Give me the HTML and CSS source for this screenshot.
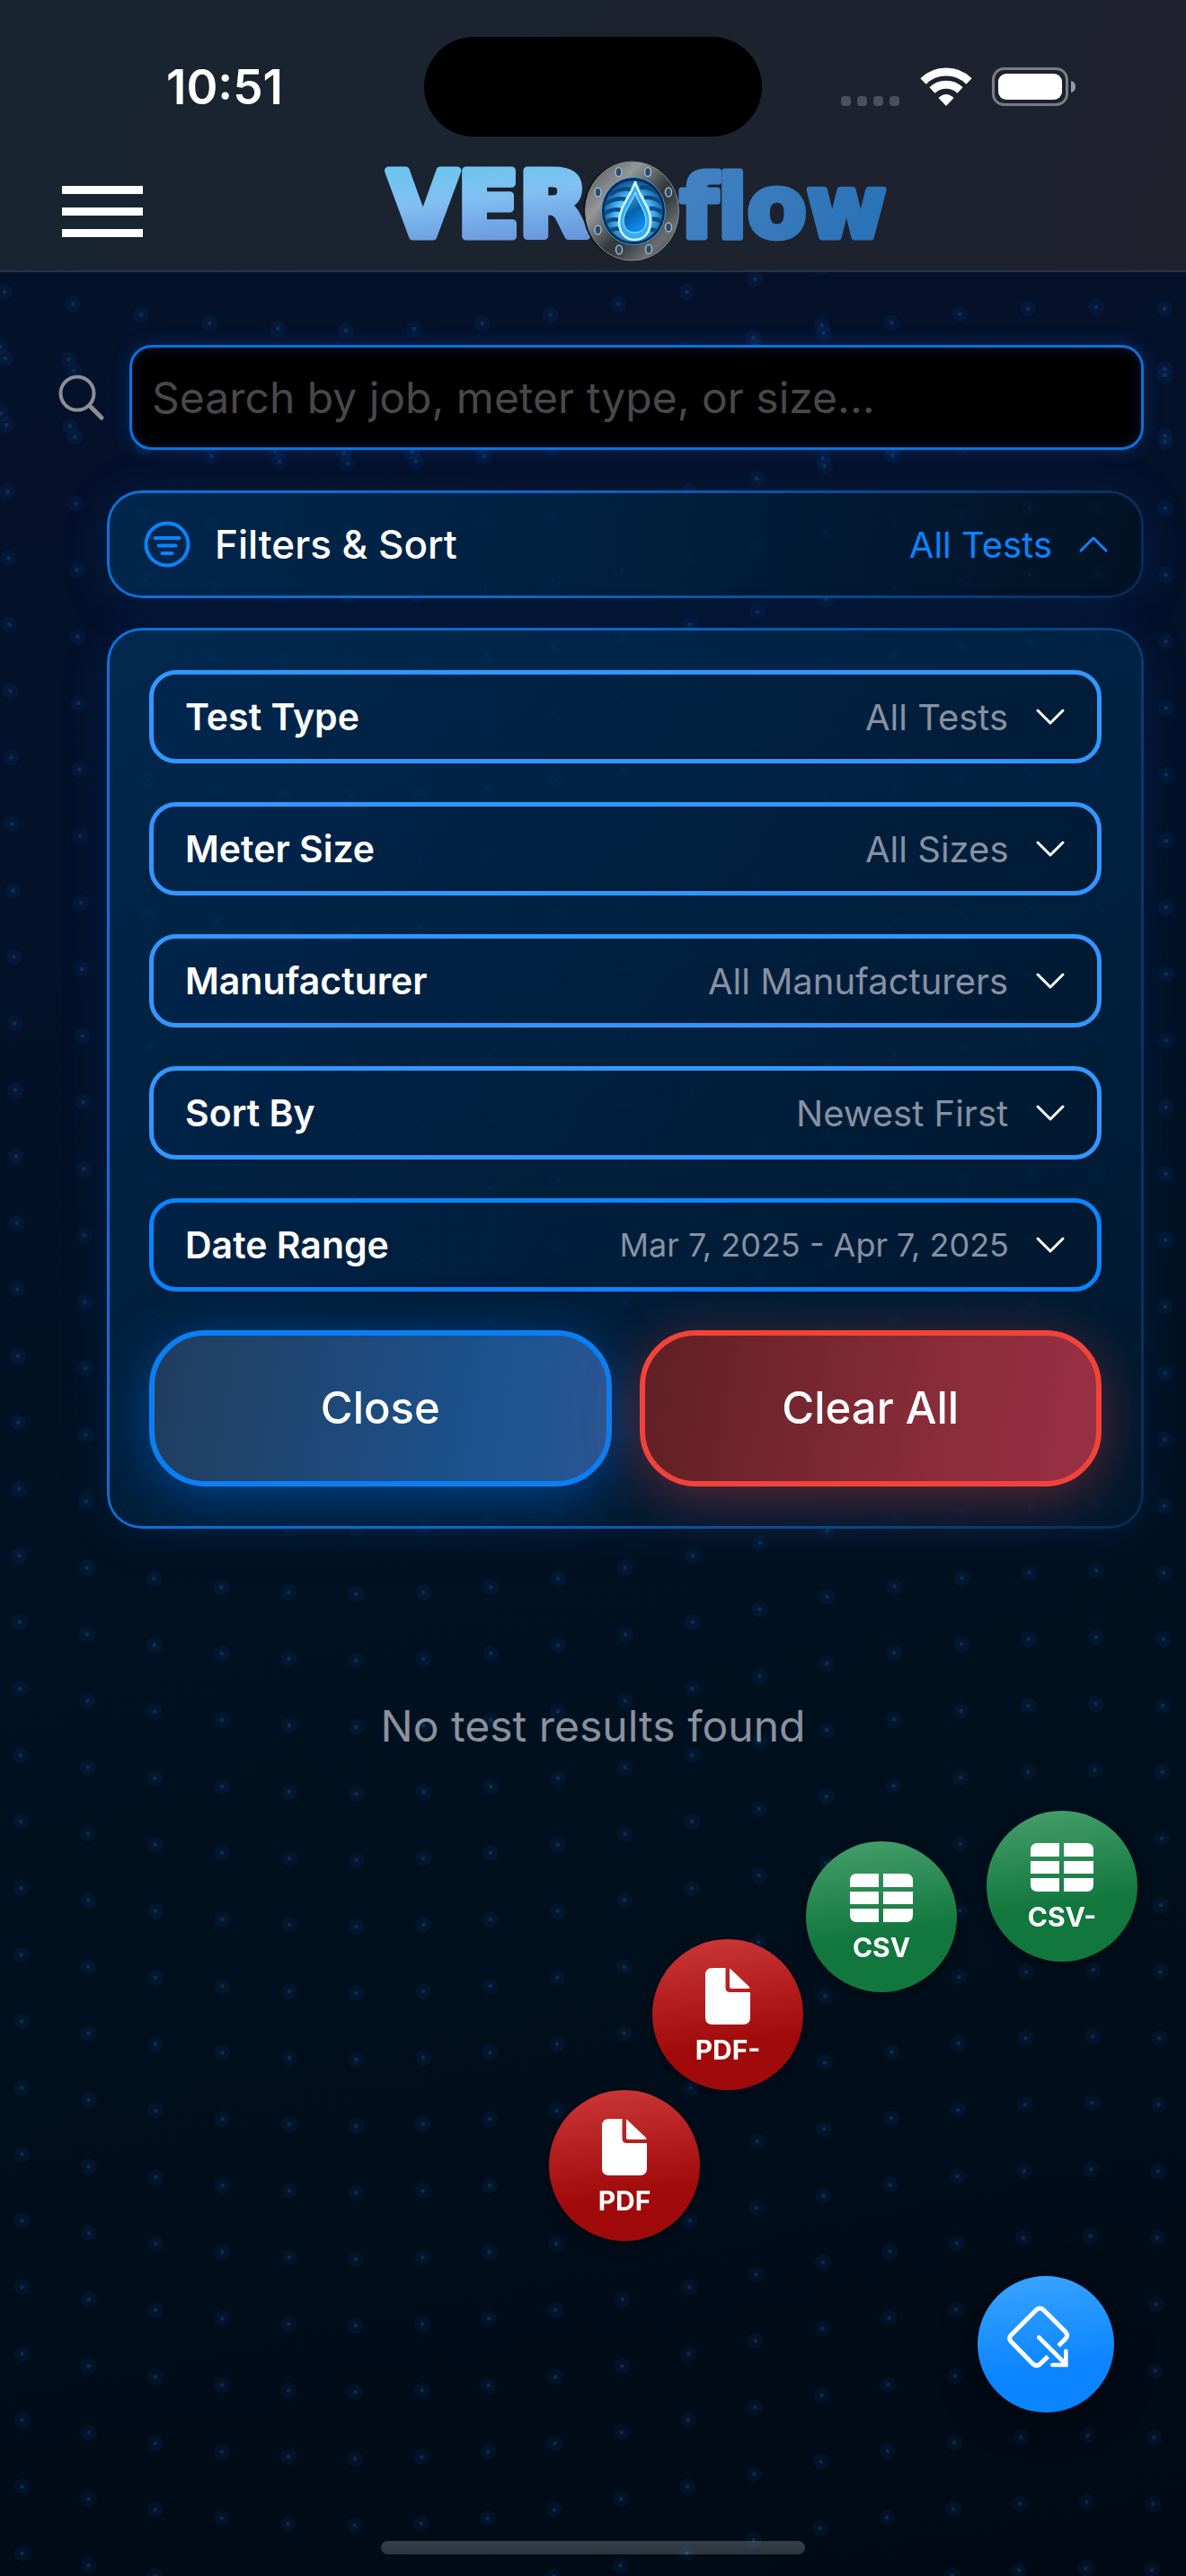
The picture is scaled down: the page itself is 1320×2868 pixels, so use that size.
FILE: index.html
```html
<!DOCTYPE html>
<html lang="en">
<head>
<meta charset="utf-8">
<meta name="viewport" content="width=device-width, initial-scale=1">
<title>VEROflow – Test Results</title>
<link rel="stylesheet" href="styles.css">
</head>
<body>
<svg class="dots" id="dots" aria-hidden="true"></svg>

<header class="header">
  <div class="status">
    <time class="clock">10:51</time>
    <span class="island"></span>
    <span class="status-icons">
      <svg width="66" height="44" viewBox="0 0 66 44" aria-hidden="true"><g fill="#4b515c"><rect x="0" y="32" width="11" height="11" rx="4"/><rect x="18" y="32" width="11" height="11" rx="4"/><rect x="36" y="32" width="11" height="11" rx="4"/><rect x="54" y="32" width="11" height="11" rx="4"/></g></svg>
      <svg width="58" height="44" viewBox="0 0 58 44" aria-hidden="true"><g fill="none" stroke="#fff" stroke-width="9"><path d="M3.500 15.500A36.500 36.500 0 0 1 54.500 15.500"/><path d="M13.500 25.500A22.500 22.500 0 0 1 44.500 25.500"/></g><path d="M20.500 34Q29 26 37.500 34L30 42Q29 43 28 42Z" fill="#fff"/></svg>
      <svg width="94" height="44" viewBox="0 0 94 44" aria-hidden="true"><rect x="1.500" y="1.500" width="82" height="40" rx="12" fill="none" stroke="#787d86" stroke-width="3"/><rect x="7" y="7" width="71" height="29" rx="9" fill="#fff"/><path d="M88 15Q93 16 93 21.500T88 28Z" fill="#9599a0"/></svg>
    </span>
  </div>
  <div class="bar">
    <button class="menu" type="button" aria-label="Menu"><span></span><span></span><span></span></button>
    <svg class="logo" width="568" height="116" viewBox="426 178 568 116" role="img" aria-label="VEROflow">
      <defs>
        <linearGradient id="ver" x1="0" y1="0" x2="0.2" y2="1"><stop offset=".2" stop-color="#6cc6ee"/><stop offset=".5" stop-color="#82bff3"/><stop offset="1" stop-color="#6592da"/></linearGradient>
        <linearGradient id="flo" x1="0" y1="0" x2="1" y2="0.3"><stop offset="0" stop-color="#4683c4"/><stop offset="1" stop-color="#2a73b6"/></linearGradient>
        <linearGradient id="metal" x1="0" y1="0" x2="1" y2="1"><stop offset="0" stop-color="#4a4f53"/><stop offset=".3" stop-color="#94979a"/><stop offset=".55" stop-color="#33393c"/><stop offset=".62" stop-color="#33393c"/><stop offset=".8" stop-color="#6b6f72"/><stop offset="1" stop-color="#3d4143"/></linearGradient>
        <radialGradient id="core" cx=".5" cy=".55" r=".55"><stop offset="0" stop-color="#d8f6ff"/><stop offset=".55" stop-color="#46b9fb"/><stop offset="1" stop-color="#0a4584"/></radialGradient>
        <linearGradient id="drop" x1="0" y1="0" x2="0.4" y2="1"><stop offset="0" stop-color="#45b4f8"/><stop offset=".55" stop-color="#0562ac"/><stop offset="1" stop-color="#0a8df0"/></linearGradient>
        <clipPath id="lens"><ellipse cx="705" cy="236" rx="32" ry="34"/></clipPath>
      </defs>
      <text class="logo-ver" x="432" y="264" fill="url(#ver)" stroke="url(#ver)">VER</text>
      <text class="logo-flow" x="757" y="265" fill="url(#flo)" stroke="url(#flo)">flow</text>
      <ellipse cx="701" cy="236" rx="52" ry="55" fill="#111416"/>
      <ellipse cx="703.500" cy="236" rx="52" ry="55" fill="url(#metal)" stroke="#888c8e"/>
      <g fill="#1f4d78" stroke="#aeb3b6" stroke-width="1.500">
        <ellipse cx="688.500" cy="192.500" rx="3.500" ry="5"/><ellipse cx="721" cy="192.500" rx="3.500" ry="5"/>
        <ellipse cx="665.500" cy="215" rx="3.500" ry="5"/><ellipse cx="744" cy="215" rx="3.500" ry="5"/>
        <ellipse cx="665.500" cy="257" rx="3.500" ry="5"/><ellipse cx="744" cy="254" rx="3.500" ry="5"/>
        <ellipse cx="689" cy="279" rx="3.500" ry="5"/><ellipse cx="722" cy="278.500" rx="3.500" ry="5"/>
      </g>
      <ellipse cx="705" cy="236" rx="34" ry="36" fill="url(#core)" stroke="#06264c" stroke-width="3"/>
      <ellipse cx="705" cy="236" rx="35.500" ry="37.500" fill="none" stroke="#3ba2e8" stroke-width="1"/>
      <g clip-path="url(#lens)" fill="none" stroke="#0b4b82" stroke-width="4.500">
        <path d="M678 218Q692 209 702 212M672 229Q685 220 697 223M671 240Q682 232 691 235M671 251Q680 243 688 246M674 262Q682 254 690 256"/>
        <path d="M712 210Q722 208 732 216M717 221Q727 219 738 228M723 233Q731 232 740 240M726 245Q733 244 740 251M724 257Q730 256 737 261"/>
      </g>
      <path d="M707 203C710 218 724 231 724 247C724 261 716 268 706 268C696 268 689 260 689 248C689 231 703 218 707 203Z" fill="#35aef5" stroke="#d5f5ff" stroke-width="2.500"/>
      <path d="M707 215C709 226 719 236 719 247C719 256 713 260 706 260C699 260 694 255 694 247C694 236 704 226 707 215Z" fill="url(#drop)" stroke="#bdeaff" stroke-width="1"/>
    </svg>
  </div>
</header>

<main>
  <div class="content">
    <div class="search">
      <svg width="52" height="52" viewBox="0 0 52 52" aria-hidden="true"><g fill="none" stroke="#8e8e93" stroke-width="4" stroke-linecap="round"><circle cx="21" cy="21" r="18.500"/><path d="M35 35L48 48" stroke-width="5"/></g></svg>
      <input type="text" aria-label="Search tests" placeholder="Search by job, meter type, or size...">
    </div>

    <button class="glass summary" type="button" aria-expanded="true">
      <svg width="52" height="52" viewBox="0 0 52 52" aria-hidden="true"><g fill="none" stroke="#0a84ff" stroke-width="4" stroke-linecap="round"><circle cx="26" cy="26" r="23.500"/><path d="M12.500 19H39.500M16.500 27.500H35.500M20.500 36H31.500"/></g></svg>
      <span class="summary-title">Filters &amp; Sort</span>
      <span class="value summary-value">All Tests</span>
      <svg width="34" height="20" viewBox="0 0 34 20" aria-hidden="true"><path d="M3 17L17 3L31 17" fill="none" stroke="#0a84ff" stroke-width="3" stroke-linecap="round" stroke-linejoin="round"/></svg>
    </button>

    <section class="glass panel" aria-label="Filters">
      <label class="row"><span>Test Type</span>
        <select class="value"><option>All Tests</option></select>
        <svg width="34" height="20" viewBox="0 0 34 20" aria-hidden="true"><path class="chev" d="M3 3L17 17L31 3"/></svg></label>
      <label class="row"><span>Meter Size</span>
        <select class="value"><option>All Sizes</option></select>
        <svg width="34" height="20" viewBox="0 0 34 20" aria-hidden="true"><path class="chev" d="M3 3L17 17L31 3"/></svg></label>
      <label class="row"><span>Manufacturer</span>
        <select class="value"><option>All Manufacturers</option></select>
        <svg width="34" height="20" viewBox="0 0 34 20" aria-hidden="true"><path class="chev" d="M3 3L17 17L31 3"/></svg></label>
      <label class="row"><span>Sort By</span>
        <select class="value"><option>Newest First</option></select>
        <svg width="34" height="20" viewBox="0 0 34 20" aria-hidden="true"><path class="chev" d="M3 3L17 17L31 3"/></svg></label>
      <button class="row row-date" type="button"><span>Date Range</span>
        <span class="value value-small">Mar 7, 2025 - Apr 7, 2025</span>
        <svg width="34" height="20" viewBox="0 0 34 20" aria-hidden="true"><path class="chev" d="M3 3L17 17L31 3"/></svg></button>
      <div class="actions">
        <button class="action close" type="button">Close</button>
        <button class="action clear" type="button">Clear All</button>
      </div>
    </section>
  </div>

  <p class="empty">No test results found</p>
</main>

<nav aria-label="Export">
  <button class="fab csv csv-minus" type="button">
    <svg width="70" height="54" viewBox="0 0 70 54" aria-hidden="true"><path fill="#fff" d="M8 0H32V15H0V8Q0 0 8 0ZM37 0H62Q70 0 70 8V15H37ZM0 20H32V34H0ZM37 20H70V34H37ZM0 39H32V54H8Q0 54 0 46ZM37 39H70V46Q70 54 62 54H37Z"/></svg>
    <span>CSV-</span>
  </button>
  <button class="fab csv csv-plain" type="button">
    <svg width="70" height="54" viewBox="0 0 70 54" aria-hidden="true"><path fill="#fff" d="M8 0H32V15H0V8Q0 0 8 0ZM37 0H62Q70 0 70 8V15H37ZM0 20H32V34H0ZM37 20H70V34H37ZM0 39H32V54H8Q0 54 0 46ZM37 39H70V46Q70 54 62 54H37Z"/></svg>
    <span>CSV</span>
  </button>
  <button class="fab pdf pdf-minus" type="button">
    <svg width="50" height="63" viewBox="0 0 50 63" aria-hidden="true"><path fill="#fff" d="M8 0H22.500V22Q22.500 27 27.500 27H50V55Q50 63 42 63H8Q0 63 0 55V8Q0 0 8 0ZM27 0.500Q28.500 1 30 3L48.500 20.500Q49.500 22 49.500 23H29Q27 23 27 21Z"/></svg>
    <span>PDF-</span>
  </button>
  <button class="fab pdf pdf-plain" type="button">
    <svg width="50" height="63" viewBox="0 0 50 63" aria-hidden="true"><path fill="#fff" d="M8 0H22.500V22Q22.500 27 27.500 27H50V55Q50 63 42 63H8Q0 63 0 55V8Q0 0 8 0ZM27 0.500Q28.500 1 30 3L48.500 20.500Q49.500 22 49.500 23H29Q27 23 27 21Z"/></svg>
    <span>PDF</span>
  </button>
  <button class="fab toggle" type="button" aria-label="Export options">
    <svg width="72" height="72" viewBox="240 196 216 216" aria-hidden="true"><g fill="none" stroke="#fff" stroke-width="14" stroke-linejoin="round"><path d="M414 333L438 309Q448 298 438 287L364 213Q352 203 340 213L256 297Q246 308 256 319L329 394Q341 404 353 394L379 369" stroke-width="15"/><path d="M349 305L438 394" stroke-linecap="round"/><path d="M439 351V397H394" stroke-linecap="round" stroke-linejoin="miter"/></g></svg>
  </button>
</nav>
<div class="home-indicator"></div>
<script src="app.js"></script>
</body>
</html>
```
FILE: styles.css
```css
* { box-sizing: border-box; }

body {
  margin: 0;
  min-height: 100vh;
  position: relative;
  background: linear-gradient(168deg, #00142a 0%, #05112b 16%, #03112a 34%, #001223 54%, #000f1d 72%, #000a15 100%);
  color: #fff;
  font-family: Inter, "Noto Sans", sans-serif;
}

button, input, select {
  margin: 0;
  border: 0;
  background: none;
  color: inherit;
  font: inherit;
}

button, label, select { cursor: pointer; }
svg { display: block; flex: none; }

.dots {
  position: absolute;
  inset: 0;
  width: 100%;
  height: 100%;
  z-index: -1;
}

/* Header */
.header {
  padding-top: 41px;
  padding-bottom: 8px;
  border-bottom: 2px solid #28344a;
  background: linear-gradient(105deg, #182531 0%, #1b232f 45%, #1f212d 100%);
}

.status {
  display: grid;
  grid-template-columns: 1fr 376px 1fr;
  align-items: center;
}

.clock {
  padding-left: 28px;
  text-align: center;
  font-size: 53px;
  line-height: 60px;
  font-weight: 600;
}

.island {
  height: 111px;
  border-radius: 56px;
  background: #000;
}

.status-icons {
  display: flex;
  justify-content: center;
  gap: 22px;
  padding-right: 34px;
}

.bar {
  display: grid;
  grid-template-columns: 90px 1fr;
  align-items: center;
  padding: 25px 60px 0 69px;
}

.menu {
  display: flex;
  flex-direction: column;
  gap: 15px;
  padding: 0;
}

.menu span { width: 90px; height: 9px; background: #fff; }

.logo { justify-self: center; overflow: visible; }

.logo text {
  font-family: "DejaVu Sans", sans-serif;
  font-weight: 700;
  font-variant-ligatures: none;
  stroke-linejoin: round;
}

.logo-ver { font-size: 100px; stroke-width: 9px; }
.logo-flow { font-size: 96px; stroke-width: 7px; }

/* Search and filters */
.content { padding: 81px 47px 0 65px; }

.search { display: flex; align-items: center; gap: 27px; }

.search input {
  flex: 1;
  min-width: 0;
  height: 117px;
  padding: 0 22px;
  border: 3px solid #0a73db;
  border-radius: 25px;
  background: #000;
  box-shadow: 0 0 20px rgba(10, 100, 220, .3), inset 0 0 14px rgba(10, 100, 220, .25);
  font-size: 48px;
  outline: 0;
}

.search input::placeholder { color: #48484a; opacity: 1; }

.glass {
  position: relative;
  margin-left: 54px;
  border-radius: 38px;
  box-shadow: 0 6px 50px rgba(0, 70, 150, .22);
}

.glass::before {
  content: "";
  position: absolute;
  inset: 0;
  padding: 3px;
  border-radius: inherit;
  background: linear-gradient(100deg, #0a74dd 0%, #0a6acb 40%, #083d78 85%, #062c57 100%);
  mask: linear-gradient(#000 0 0) content-box exclude, linear-gradient(#000 0 0);
  pointer-events: none;
}

.summary {
  display: flex;
  align-items: center;
  width: calc(100% - 54px);
  height: 120px;
  margin-top: 45px;
  padding: 0 39px 0 41px;
  background: linear-gradient(100deg, rgba(0, 42, 82, .85), rgba(0, 36, 68, .8) 45%, rgba(0, 18, 34, .75));
}

.summary-title {
  margin-left: 27px;
  font-size: 44px;
  font-weight: 500;
}

.value {
  margin-left: auto;
  margin-right: 29px;
  padding: 0;
  color: #8791a2;
  font-size: 40px;
  font-weight: 400;
}

.summary-value { color: #0a84ff; }

.panel {
  display: flex;
  flex-direction: column;
  gap: 43px;
  margin-top: 33px;
  padding: 47px;
  background: linear-gradient(155deg, rgba(0, 44, 84, .85), rgba(0, 36, 68, .82) 45%, rgba(0, 24, 46, .8));
}

.row {
  display: flex;
  align-items: center;
  height: 104px;
  padding: 0 35px;
  border: 5px solid #3396ff;
  border-radius: 30px;
  background: linear-gradient(100deg, rgba(0, 36, 80, .4), rgba(0, 20, 40, .4));
  font-size: 41px;
  font-weight: 600;
}

.row-date { border-color: #0a84ff; }

.row select { appearance: none; outline: 0; }
.value-small { font-size: 36px; }

.chev {
  fill: none;
  stroke: #fff;
  stroke-width: 3px;
  stroke-linecap: round;
  stroke-linejoin: round;
}

.actions { display: grid; grid-template-columns: 1fr 1fr; gap: 31px; }

.action {
  height: 174px;
  padding: 0 0 2px;
  border: 6px solid;
  border-radius: 62px;
  font-size: 49px;
  font-weight: 500;
}

.close {
  border-color: #0a7ff5;
  background: linear-gradient(100deg, #213d5e, #1c5390 75%, #2b5794);
  box-shadow: 0 12px 60px rgba(0, 110, 230, .5);
}

.clear {
  border-color: #f2433a;
  background: linear-gradient(100deg, #5f2024, #8a2c3a 65%, #993044);
  box-shadow: 0 12px 60px rgba(220, 60, 60, .42);
}

.empty {
  margin: 0;
  padding: 190px 24px 560px;
  text-align: center;
  color: #8b919d;
  font-size: 48px;
  line-height: 60px;
}

/* Floating export buttons */
.fab {
  position: fixed;
  display: flex;
  flex-direction: column;
  align-items: center;
  justify-content: center;
  gap: 10px;
  width: 168px;
  height: 168px;
  padding: 4px 0 0;
  border-radius: 50%;
  box-shadow: 0 4px 16px rgba(0, 0, 0, .35);
  font-size: 30px;
  line-height: 36px;
  font-weight: 700;
}

.csv { background: linear-gradient(172deg, #47a06c 0%, #11773d 62%); }
.pdf { background: linear-gradient(172deg, #cd3838 0%, #a10a0a 68%); }
.csv-minus { right: 54px; bottom: 684px; }
.csv-plain { right: 255px; bottom: 650px; }
.pdf-minus { right: 426px; bottom: 541px; }
.pdf-plain { right: 541px; bottom: 373px; }

.toggle {
  right: 80px;
  bottom: 182px;
  width: 152px;
  height: 152px;
  padding: 0 16px 16px 0;
  background: linear-gradient(172deg, #3ba5ff 0%, #0a84ff 68%);
  box-shadow: 0 10px 40px rgba(0, 0, 0, .5);
}

.home-indicator {
  position: fixed;
  bottom: 24px;
  left: 50%;
  width: 472px;
  height: 15px;
  margin-left: -236px;
  border-radius: 8px;
  background: linear-gradient(rgba(255, 255, 255, .21), rgba(255, 255, 255, .17));
}
```
FILE: app.js
```js
// Draws the rippling dot field behind the page.
(function () {
  var svg = document.getElementById('dots');
  var NS = 'http://www.w3.org/2000/svg';
  var COLS = 18, ROW_STEP = 74.05, BASE = 540;

  function circle(parent, x, y, r, fill) {
    var c = document.createElementNS(NS, 'circle');
    c.setAttribute('cx', x.toFixed(1));
    c.setAttribute('cy', y.toFixed(1));
    c.setAttribute('r', r);
    c.setAttribute('fill', fill);
    parent.appendChild(c);
  }

  function dot(x, y) {
    circle(svg, x, y, 9, 'rgba(20, 80, 170, .11)');
    circle(svg, x, y, 2.3, 'rgba(60, 110, 170, .25)');
  }

  function draw() {
    svg.textContent = '';
    var scale = window.innerWidth / 1320;
    var rows = Math.ceil((document.body.offsetHeight - BASE) / ROW_STEP) + 1;
    for (var j = -4; j < rows; j++) {
      for (var i = 0; i < COLS; i++) {
        var y = BASE + ROW_STEP * j + 50 * Math.cos((i - 5) * Math.PI / 11);
        var t = (y - 547) / 1000;
        var left = 8.4 + 15.3 * t - 3.6 * t * t;
        var right = 1297 + 4 * t - 4.5 * t * t;
        var x = left + (right - left) * i / (COLS - 1);
        dot(x * scale, y);
        if (y > 370 && y < 530) {
          dot((x - 6 + i / 3) * scale, y - 13 + i / 3);
        }
      }
    }
  }

  draw();
  window.addEventListener('resize', draw);
})();
```
